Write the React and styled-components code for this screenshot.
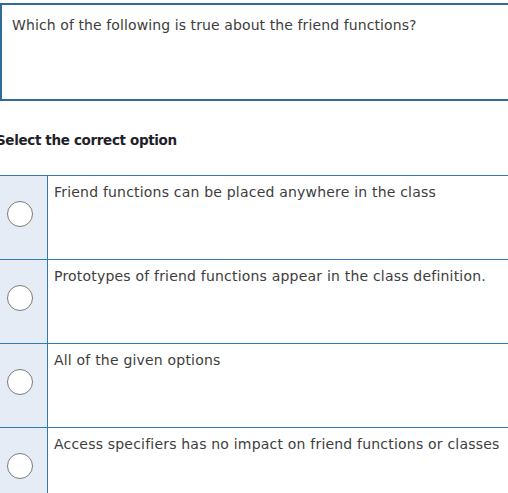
import React from "react";
import styled, { createGlobalStyle } from "styled-components";

const Global = createGlobalStyle`
  html, body { margin: 0; padding: 0; background: #fff; }
  body { font-family: "DejaVu Sans", "Liberation Sans", sans-serif; overflow: hidden; }
  #root { width: 508px; overflow: hidden; }
`;

const Page = styled.div`
  width: 508px;
  height: 493px;
  overflow: hidden;
  padding-top: 3px;
  box-sizing: border-box;
`;

const QuestionBox = styled.div`
  width: 530px;
  height: 98px;
  box-sizing: border-box;
  border: 2px solid #2f6d99;
  padding: 10px 10px;
  font-size: 14px;
  line-height: 20px;
  letter-spacing: 0.1px;
  color: #3d3d3d;
`;

const Heading = styled.div`
  margin: 29px 0 0 -4px;
  font-size: 13.5px;
  line-height: 20px;
  font-weight: 700;
  letter-spacing: -0.35px;
  color: #1f1f2b;
`;

const Options = styled.div`
  margin-top: 25px;
  width: 530px;
`;

const Row = styled.label`
  display: flex;
  height: 84px;
  border-top: 1px solid #2f7ab3;
  box-sizing: border-box;
`;

const RadioCell = styled.div`
  width: 48px;
  flex: none;
  background: #e5ecf6;
  border-right: 1px solid #2f7ab3;
  display: flex;
  justify-content: center;
  align-items: flex-start;
  padding-top: 25px;
  box-sizing: border-box;
`;

const Radio = styled.span`
  width: 26px;
  height: 26px;
  box-sizing: border-box;
  border-radius: 50%;
  border: 1.5px solid #7a7a7a;
  background: #fff;
  margin-left: -8px;
`;

const OptionText = styled.div`
  padding: 6px 6px;
  font-size: 14px;
  line-height: 20px;
  letter-spacing: 0.2px;
  color: #3d3d3d;
`;

const options = [
  "Friend functions can be placed anywhere in the class",
  "Prototypes of friend functions appear in the class definition.",
  "All of the given options",
  "Access specifiers has no impact on friend functions or classes",
];

export default function App() {
  return (
    <Page>
      <Global />
      <QuestionBox>Which of the following is true about the friend functions?</QuestionBox>
      <Heading>Select the correct option</Heading>
      <Options>
        {options.map((o) => (
          <Row key={o}>
            <RadioCell>
              <Radio />
            </RadioCell>
            <OptionText>{o}</OptionText>
          </Row>
        ))}
      </Options>
    </Page>
  );
}
